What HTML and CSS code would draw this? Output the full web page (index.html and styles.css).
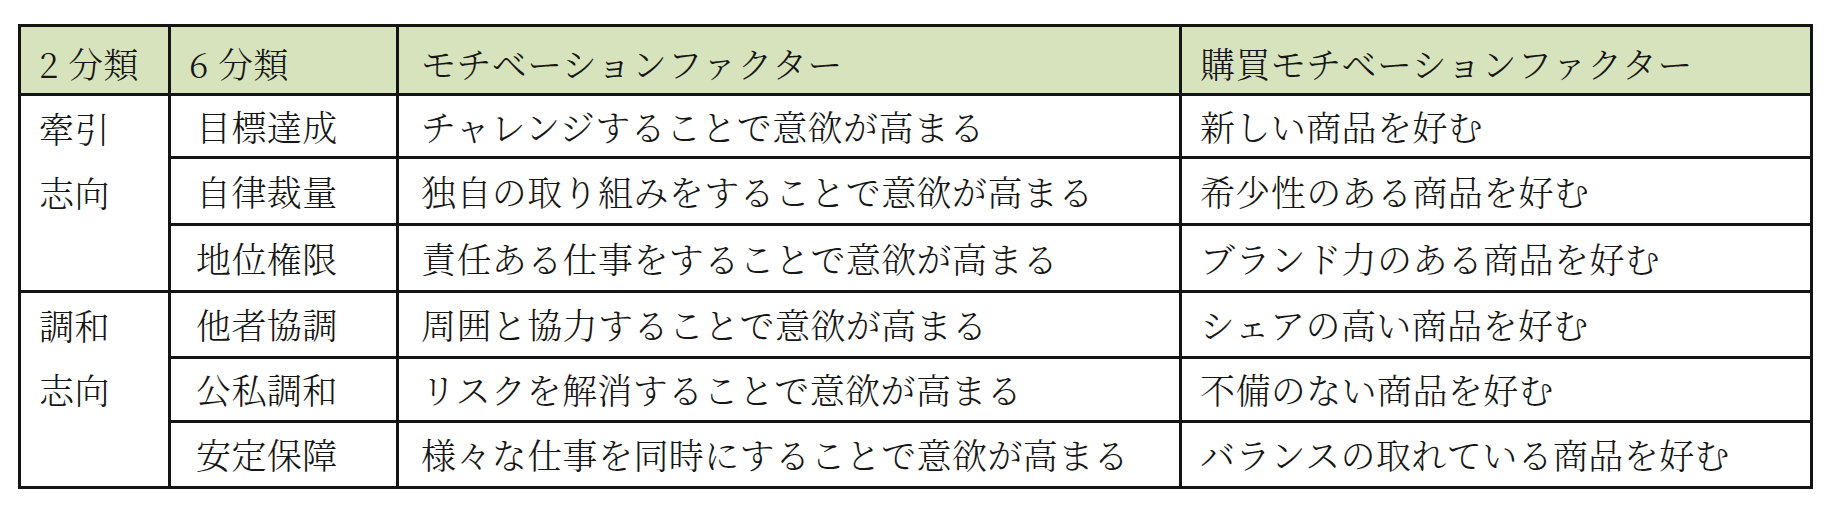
FILE: index.html
```html
<!DOCTYPE html>
<html lang="ja">
<head>
<meta charset="utf-8">
<title>モチベーションファクター</title>
<link rel="stylesheet" href="styles.css">
</head>
<body>
<table class="factors">
  <colgroup>
    <col class="c1">
    <col class="c2">
    <col class="c3">
    <col class="c4">
  </colgroup>
  <thead>
    <tr class="head">
      <th class="k1">2 分類</th>
      <th class="k2">6 分類</th>
      <th class="k3">モチベーションファクター</th>
      <th class="k4">購買モチベーションファクター</th>
    </tr>
  </thead>
  <tbody>
    <tr class="r1">
      <td class="k1 group" rowspan="3">牽引<br>志向</td>
      <td class="k2 sub">目標達成</td>
      <td class="k3">チャレンジすることで意欲が高まる</td>
      <td class="k4">新しい商品を好む</td>
    </tr>
    <tr class="r2">
      <td class="k2 sub">自律裁量</td>
      <td class="k3">独自の取り組みをすることで意欲が高まる</td>
      <td class="k4">希少性のある商品を好む</td>
    </tr>
    <tr class="r3">
      <td class="k2 sub">地位権限</td>
      <td class="k3">責任ある仕事をすることで意欲が高まる</td>
      <td class="k4">ブランド力のある商品を好む</td>
    </tr>
    <tr class="r4">
      <td class="k1 group" rowspan="3">調和<br>志向</td>
      <td class="k2 sub">他者協調</td>
      <td class="k3">周囲と協力することで意欲が高まる</td>
      <td class="k4">シェアの高い商品を好む</td>
    </tr>
    <tr class="r5">
      <td class="k2 sub">公私調和</td>
      <td class="k3">リスクを解消することで意欲が高まる</td>
      <td class="k4">不備のない商品を好む</td>
    </tr>
    <tr class="r6">
      <td class="k2 sub">安定保障</td>
      <td class="k3">様々な仕事を同時にすることで意欲が高まる</td>
      <td class="k4">バランスの取れている商品を好む</td>
    </tr>
  </tbody>
</table>
</body>
</html>
```

FILE: styles.css
```css
html, body {
  margin: 0;
  padding: 0;
  background: #ffffff;
}

body {
  padding: 24px 0 0 18px;
  font-family: "Noto Serif CJK JP", "Noto Sans CJK JP", "Liberation Serif", serif;
  color: #161616;
}

.factors {
  border-collapse: collapse;
  table-layout: fixed;
  width: 1792px;
  border: 3px solid #141414;
  font-size: 35px;
  font-weight: 300;
  letter-spacing: 0.4px;
  line-height: 1;
}

.c1 { width: 150px; }
.c2 { width: 228px; }
.c3 { width: 783px; }
.c4 { width: 631px; }

.factors th,
.factors td {
  border: 3px solid #141414;
  text-align: left;
  vertical-align: middle;
  font-weight: 300;
  padding: 0 0 0 18px;
  white-space: nowrap;
}

.factors th {
  background: #d7e3bc;
  padding-top: 6px;
}

.factors th.k3,
.factors td.k3 { padding-left: 22px; }

.factors th.k4,
.factors td.k4 { padding-left: 18px; }

.factors td.sub { padding-left: 25px; }

.factors td.group {
  vertical-align: top;
  line-height: 64px;
  padding-top: 0;
}

.head { height: 69px; }
.r1 { height: 63px; }
.r2 { height: 67px; }
.r3 { height: 67px; }
.r4 { height: 66px; }
.r5 { height: 64px; }
.r6 { height: 66px; }
```
